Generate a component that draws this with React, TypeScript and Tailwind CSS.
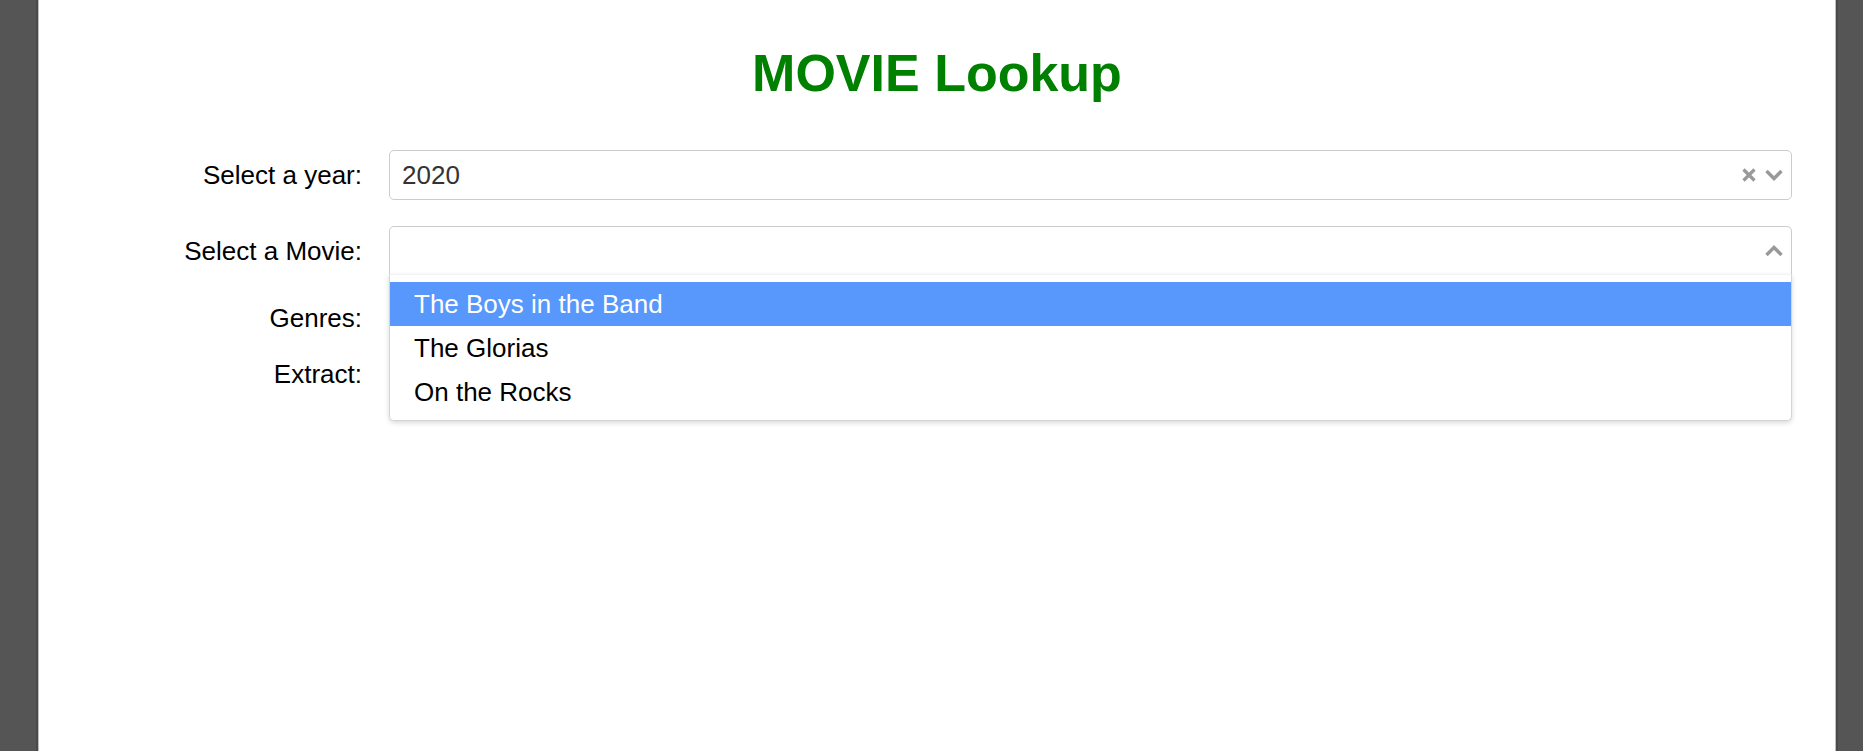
import React from 'react';

const years = '2020';
const movies = ['The Boys in the Band', 'The Glorias', 'On the Rocks'];

const ClearIcon = () => (
  <svg width="14" height="14" viewBox="0 0 14 14" className="block">
    <path d="M1.5 1.5 L12.5 12.5 M12.5 1.5 L1.5 12.5" stroke="#999" strokeWidth="3.2" fill="none" />
  </svg>
);

const ChevronIcon = ({ up = false }: { up?: boolean }) => (
  <svg width="18" height="12" viewBox="0 0 18 12" className="block">
    <path
      d={up ? 'M1.5 10 L9 2.5 L16.5 10' : 'M1.5 2 L9 9.5 L16.5 2'}
      stroke="#999"
      strokeWidth="3.4"
      fill="none"
    />
  </svg>
);

const Label = ({ children }: { children: React.ReactNode }) => (
  <div className="w-[323px] shrink-0 text-right text-black">{children}</div>
);

export default function App() {
  return (
    <div
      className="flex h-[751px] bg-[#555555] pl-[36px] pr-[25px] text-[26px]"
      style={{ fontFamily: '"Liberation Sans", Arial, sans-serif' }}
    >
      <div className="flex flex-1 border-x-2 border-[#4a4a4a]">
        <div className="flex-1 border-x border-[#bdbdbd] bg-white">
          <h1 className="mt-[43px] text-center text-[52px] font-bold leading-[60px] text-[#008000]">
            MOVIE Lookup
          </h1>

          <div className="mt-[47px] flex flex-col gap-[26px] pr-[43px]">
            {/* Year */}
            <div className="flex items-center">
              <Label>Select a year:</Label>
              <div className="ml-[27px] flex h-[50px] flex-1 items-center rounded-[5px] border border-[#cccccc] bg-white pl-[12px] pr-[8px]">
                <span className="flex-1 text-[#333333]">{years}</span>
                <div className="flex items-center gap-[9px]">
                  <ClearIcon />
                  <ChevronIcon />
                </div>
              </div>
            </div>

            {/* Movie */}
            <div className="flex items-center">
              <Label>Select a Movie:</Label>
              <div className="relative ml-[27px] flex-1">
                <div className="flex h-[50px] items-center justify-end rounded-t-[5px] border border-[#cccccc] bg-white pr-[8px]">
                  <ChevronIcon up />
                </div>
                <div className="absolute left-0 right-0 top-[48px] z-10 rounded-b-[5px] border border-[#d4d4d4] border-t-[#f2f2f2] bg-white pb-[6px] pt-[7px] shadow-[0_2px_5px_rgba(0,0,0,0.15)]">
                  {movies.map((m, i) => (
                    <div
                      key={m}
                      className={`flex h-[44px] items-center pl-[24px] ${
                        i === 0 ? 'bg-[#5897fb] text-white' : 'text-black'
                      }`}
                    >
                      {m}
                    </div>
                  ))}
                </div>
              </div>
            </div>

            {/* Genres */}
            <div className="mt-[1px] flex leading-[30px]">
              <Label>Genres:</Label>
            </div>

            {/* Extract */}
            <div className="flex leading-[30px]">
              <Label>Extract:</Label>
            </div>
          </div>
        </div>
      </div>
    </div>
  );
}
